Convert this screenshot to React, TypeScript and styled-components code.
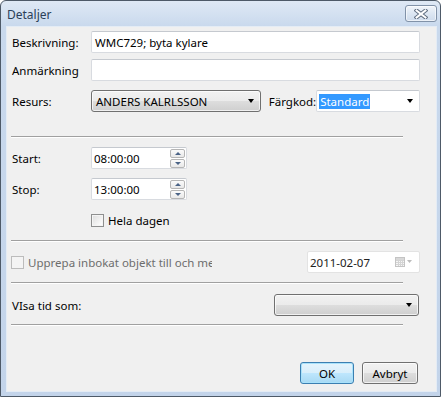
import React from 'react'
import styled, {createGlobalStyle, css} from 'styled-components'

// -------------------------------------------------------------
// Global.
// -------------------------------------------------------------

const GlobalStyle = createGlobalStyle`
  html, body {
    margin: 0;
    padding: 0;
    background: #ffffff;
  }

  body {
    font-family: "Noto Sans", "Open Sans", sans-serif;
    font-size: 11.5px;
    color: #000000;
  }
`

// -------------------------------------------------------------
// Window chrome.
// -------------------------------------------------------------

const Window = styled.div`
  box-sizing: border-box;
  display: flex;
  flex-direction: column;
  width: 441px;
  height: 397px;

  padding: 0 3px 4px 5px;

  background: linear-gradient(#dfe9f5, #c9d9ed 25px, #c3d4ea);
  border: 1px solid #4e5a68;
  border-radius: 6px 6px 0 0;
`

const TitleBar = styled.div`
  display: flex;
  align-items: flex-start;
  height: 25px;
`

const Title = styled.div`
  flex: 1;
  padding: 5px 0 0 1px;

  color: #2b3f58;
  font-size: 12px;
`

const CloseButton = styled.div`
  box-sizing: border-box;
  display: flex;
  align-items: center;
  justify-content: center;
  width: 32px;
  height: 17px;

  margin: 4px 0 0 0;

  background: linear-gradient(#f1f5fa, #dde7f3 50%, #cfdcec);
  border: 1px solid #8192a8;
  border-radius: 3px;
  box-shadow: inset 0 0 0 1px rgba(255, 255, 255, 0.6);
`

const Client = styled.div`
  flex: 1;
  display: flex;
  flex-direction: column;

  padding: 4px 16px 0 4px;

  background: #f0f0f0;
  border: 1px solid #e4ecf5;
`

// -------------------------------------------------------------
// Form parts.
// -------------------------------------------------------------

const Row = styled.div<{$top: number; $height?: number}>`
  display: flex;
  align-items: center;
  height: ${p => p.$height || 22}px;
  margin-top: ${p => p.$top}px;
`

const Label = styled.div<{$width?: number}>`
  box-sizing: border-box;
  flex: ${p => (p.$width ? 'none' : '0 0 auto')};
  width: ${p => (p.$width ? `${p.$width}px` : 'auto')};
  padding-left: 1px;

  white-space: nowrap;
`

const Separator = styled.div<{$top: number}>`
  width: 392px;
  height: 1px;
  margin-top: ${p => p.$top}px;

  background: #a0a0a0;
  border-bottom: 1px solid #ffffff;
`

const fieldBox = css`
  box-sizing: border-box;
  height: 22px;

  background: #ffffff;
  border: 1px solid #d8dbe0;
  border-top-color: #c5c9cf;
  border-radius: 2px;
`

const TextField = styled.div`
  ${fieldBox};
  flex: 1;
  display: flex;
  align-items: center;
  padding: 0 3px;
`

const gradientButton = css`
  box-sizing: border-box;
  background: linear-gradient(#f2f2f2, #ebebeb 50%, #dddddd 51%, #cfcfcf);
  border: 1px solid #707070;
  border-radius: 3px;
  box-shadow: inset 0 0 0 1px rgba(255, 255, 255, 0.7);
`

const Combo = styled.div<{$width: number; $light?: boolean}>`
  ${p => (p.$light ? fieldBox : gradientButton)};
  display: flex;
  align-items: center;
  width: ${p => p.$width}px;
  height: 22px;
  padding: 0 6px 0 4px;
`

const ComboText = styled.span`
  flex: 1;
  white-space: nowrap;
`

const Selected = styled.span`
  padding: 0 1px;
  margin-left: -2px;

  color: #ffffff;
  background: #3399ff;
`

const Arrow = styled.span<{$color?: string}>`
  width: 0;
  height: 0;

  border-left: 3.5px solid transparent;
  border-right: 3.5px solid transparent;
  border-top: 4px solid ${p => p.$color || '#000000'};
`

const TimeField = styled.div`
  ${fieldBox};
  display: flex;
  align-items: center;
  width: 96px;
  padding: 0 1px 0 2px;
`

const Spinner = styled.div`
  display: flex;
  flex-direction: column;
  gap: 1px;
`

const SpinButton = styled.div`
  box-sizing: border-box;
  display: flex;
  align-items: center;
  justify-content: center;
  width: 15px;
  height: 9px;

  background: linear-gradient(#fbfbfb, #e8e8e8);
  border: 1px solid #b5b5b5;
  border-radius: 2px;
`

const SpinArrow = styled.span<{$up?: boolean}>`
  width: 0;
  height: 0;

  border-left: 3.5px solid transparent;
  border-right: 3.5px solid transparent;
  ${p =>
    p.$up
      ? 'border-bottom: 3px solid #4a6386;'
      : 'border-top: 3px solid #4a6386;'}
`

const Check = styled.div<{$disabled?: boolean}>`
  box-sizing: border-box;
  flex: none;
  width: 13px;
  height: 13px;

  background: ${p =>
    p.$disabled
      ? '#f4f4f4'
      : 'linear-gradient(135deg, #dcdcdc, #f6f6f6 70%, #ffffff)'};
  border: 1px solid ${p => (p.$disabled ? '#bcbcbc' : '#8e8f8f')};
  box-shadow: inset 0 0 0 1px #f4f4f4;
`

const CheckLabel = styled.span<{$disabled?: boolean; $width?: number}>`
  overflow: hidden;
  width: ${p => (p.$width ? `${p.$width}px` : 'auto')};
  margin-left: 4px;

  color: ${p => (p.$disabled ? '#6d6d6d' : '#000000')};
  white-space: nowrap;
`

const DateField = styled.div`
  ${fieldBox};
  display: flex;
  align-items: center;
  width: 113px;
  margin-left: auto;
  padding: 0 6px 0 2px;

  border-color: #e3e3e3;

  span {
    flex: 1;
    color: #222222;
  }
`

const ButtonRow = styled.div`
  display: flex;
  justify-content: flex-end;
  gap: 8px;

  margin-top: 36px;
  padding-right: 2px;
`

const Button = styled.div<{$primary?: boolean; $width: number}>`
  ${gradientButton};
  display: flex;
  align-items: center;
  justify-content: center;
  width: ${p => p.$width}px;
  height: 22px;

  ${p =>
    p.$primary &&
    css`
      background: linear-gradient(#e5f4fc, #d8eefb 50%, #bee6fd 51%, #a8d9f3);
      border-color: #3c7fb1;
      box-shadow: inset 0 0 0 1px #a9e2fb;
    `}
`

// -------------------------------------------------------------
// Icons.
// -------------------------------------------------------------

const CloseIcon = () => (
  <svg width="14" height="10" viewBox="0 0 14 10">
    <path
      d="M2.5 1.5 L11.5 8.5 M11.5 1.5 L2.5 8.5"
      stroke="#5d6b7e"
      strokeWidth="4"
      strokeLinecap="square"
    />
    <path
      d="M2.5 1.5 L11.5 8.5 M11.5 1.5 L2.5 8.5"
      stroke="#ffffff"
      strokeWidth="2"
      strokeLinecap="square"
    />
  </svg>
)

const CalendarIcon = () => (
  <svg width="18" height="10" viewBox="0 0 18 10">
    <rect x="0.5" y="0.5" width="9" height="9" fill="#f6f6f6" stroke="#c4c4c4" />
    <path
      d="M1 3.5 H9 M1 5.5 H9 M1 7.5 H9 M3.5 3 V9 M5.5 3 V9 M7.5 3 V9"
      stroke="#d4d4d4"
    />
    <rect x="1" y="1" width="8" height="2" fill="#d8d8d8" />
    <path d="M12 3 H17 L14.5 6 Z" fill="#bcbcbc" />
  </svg>
)

// -------------------------------------------------------------
// Export.
// -------------------------------------------------------------

const TimeInput = ({value}: {value: string}) => (
  <TimeField>
    <ComboText>{value}</ComboText>
    <Spinner>
      <SpinButton>
        <SpinArrow $up />
      </SpinButton>
      <SpinButton>
        <SpinArrow />
      </SpinButton>
    </Spinner>
  </TimeField>
)

export default function App() {
  return (
    <>
      <GlobalStyle />
      <Window>
        <TitleBar>
          <Title>Detaljer</Title>
          <CloseButton>
            <CloseIcon />
          </CloseButton>
        </TitleBar>

        <Client>
          <Row $top={0}>
            <Label $width={80}>Beskrivning:</Label>
            <TextField>WMC729; byta kylare</TextField>
          </Row>
          <Row $top={6}>
            <Label $width={80}>Anmärkning</Label>
            <TextField />
          </Row>
          <Row $top={9}>
            <Label $width={80}>Resurs:</Label>
            <Combo $width={170}>
              <ComboText>ANDERS KALRLSSON</ComboText>
              <Arrow />
            </Combo>
            <Label style={{marginLeft: 7}}>Färgkod:</Label>
            <Combo $width={104} $light style={{marginLeft: 'auto'}}>
              <ComboText>
                <Selected>Standard</Selected>
              </ComboText>
              <Arrow />
            </Combo>
          </Row>

          <Separator $top={24} />

          <Row $top={9}>
            <Label $width={80}>Start:</Label>
            <TimeInput value="08:00:00" />
          </Row>
          <Row $top={9}>
            <Label $width={80}>Stop:</Label>
            <TimeInput value="13:00:00" />
          </Row>
          <Row $top={14} $height={13}>
            <Label $width={80} />
            <Check />
            <CheckLabel>Hela dagen</CheckLabel>
          </Row>

          <Separator $top={13} />

          <Row $top={9}>
            <Check $disabled />
            <CheckLabel $disabled $width={184}>
              Upprepa inbokat objekt till och med
            </CheckLabel>
            <DateField>
              <span>2011-02-07</span>
              <CalendarIcon />
            </DateField>
          </Row>

          <Separator $top={9} />

          <Row $top={10}>
            <Label>VIsa tid som:</Label>
            <Combo $width={145} style={{marginLeft: 'auto', marginRight: 1}}>
              <ComboText />
              <Arrow />
            </Combo>
          </Row>

          <Separator $top={8} />

          <ButtonRow>
            <Button $primary $width={54}>
              OK
            </Button>
            <Button $width={56}>Avbryt</Button>
          </ButtonRow>
        </Client>
      </Window>
    </>
  )
}
